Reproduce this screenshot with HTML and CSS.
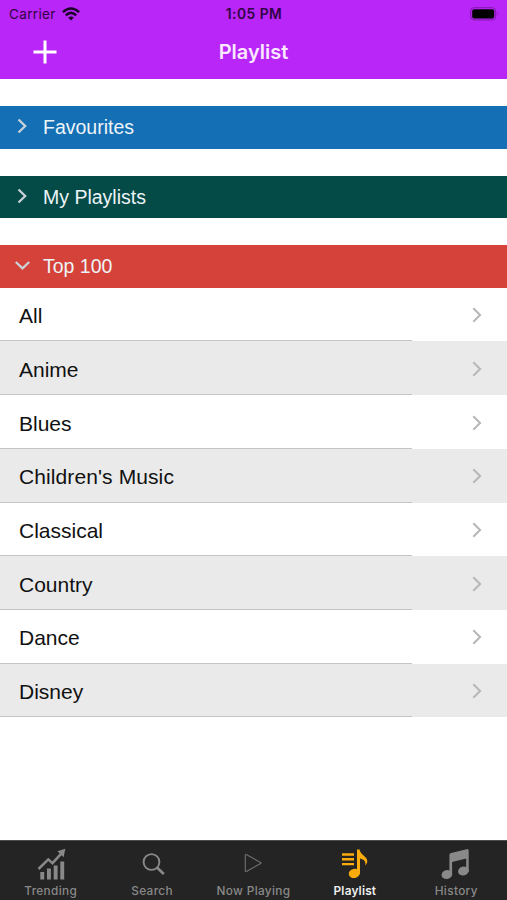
FILE: index.html
```
<!DOCTYPE html>
<html lang="en">
<head>
<meta charset="utf-8">
<title>Playlist</title>
<link rel="stylesheet" href="styles.css">
</head>
<body>
<div class="app">
  <header class="header">
    <div class="status">
      <div class="carrier"><span>Carrier</span>
        <svg width="18" height="14" viewBox="0 0 18 14"><g fill="none" stroke="#1b0428" stroke-width="2.5"><path d="M.9 5.1Q9-2.1 17.1 5.1"/><path d="M3.8 8.3Q9 3.5 14.2 8.3"/></g><path d="M6.1 10.6Q9 8.2 11.9 10.6L9 13.6Z" fill="#1b0428"/></svg>
      </div>
      <div class="time">1:05 PM</div>
      <svg class="battery" width="29" height="14" viewBox="0 0 29 14"><rect x=".7" y=".7" width="25" height="12.2" rx="3.3" fill="none" stroke="#8019aa"/><rect x="2.2" y="2.2" width="22" height="9.2" rx="2" fill="#000"/><path d="M27.2 5Q29 6.8 27.2 8.6Z" fill="#8019aa"/></svg>
    </div>
    <div class="navbar">
      <svg class="plus" width="24" height="24" viewBox="0 0 24 24"><path d="M12 .5v23M.5 12h23" stroke="#fff" stroke-width="3"/></svg>
      <h1 class="title">Playlist</h1>
    </div>
  </header>
  <main class="content">
    <div class="section favourites"><svg width="16" height="16" viewBox="0 0 16 16"><path d="M3.5 1.5l6.7 6.5-6.7 6.5"/></svg><span>Favourites</span></div>
    <div class="section mine"><svg width="16" height="16" viewBox="0 0 16 16"><path d="M3.5 1.5l6.7 6.5-6.7 6.5"/></svg><span>My Playlists</span></div>
    <div class="section top"><svg width="16" height="16" viewBox="0 0 16 16"><path d="M.8 5l6.7 6.4L14.2 5"/></svg><span>Top 100</span></div>
    <ul class="list">
      <li><span>All</span><svg width="10" height="16" viewBox="0 0 10 16"><path d="M1.3 1.2l6.8 6.8-6.8 6.8"/></svg></li>
      <li><span>Anime</span><svg width="10" height="16" viewBox="0 0 10 16"><path d="M1.3 1.2l6.8 6.8-6.8 6.8"/></svg></li>
      <li><span>Blues</span><svg width="10" height="16" viewBox="0 0 10 16"><path d="M1.3 1.2l6.8 6.8-6.8 6.8"/></svg></li>
      <li><span class="wide">Children's Music</span><svg width="10" height="16" viewBox="0 0 10 16"><path d="M1.3 1.2l6.8 6.8-6.8 6.8"/></svg></li>
      <li><span>Classical</span><svg width="10" height="16" viewBox="0 0 10 16"><path d="M1.3 1.2l6.8 6.8-6.8 6.8"/></svg></li>
      <li><span>Country</span><svg width="10" height="16" viewBox="0 0 10 16"><path d="M1.3 1.2l6.8 6.8-6.8 6.8"/></svg></li>
      <li><span>Dance</span><svg width="10" height="16" viewBox="0 0 10 16"><path d="M1.3 1.2l6.8 6.8-6.8 6.8"/></svg></li>
      <li><span>Disney</span><svg width="10" height="16" viewBox="0 0 10 16"><path d="M1.3 1.2l6.8 6.8-6.8 6.8"/></svg></li>
    </ul>
  </main>
  <nav class="tabs">
    <div class="tab">
      <svg width="32" height="34" viewBox="0 0 32 34"><path d="M5.3 25h3.9v7.5H5.3zM12 21.5h3.9v11H12zM18.7 18.5h3.9v14h-3.9zM25.3 14.5h3.9v18h-3.9z" fill="currentColor"/><path d="M3.5 22l9.8-9.6 4.2 3.8 9.2-10" fill="none" stroke="currentColor" stroke-width="2.5"/><path d="M22.4 4.2l7.9-2.4-1.7 8.4z" fill="currentColor"/></svg>
      <span>Trending</span>
    </div>
    <div class="tab">
      <svg width="32" height="34" viewBox="0 0 32 34"><g fill="none" stroke="currentColor"><circle cx="15.5" cy="15" r="7.9" stroke-width="1.9"/><path d="M21 20.6l6.8 6.5" stroke-width="2.7"/></g></svg>
      <span>Search</span>
    </div>
    <div class="tab">
      <svg width="32" height="34" viewBox="0 0 32 34"><path d="M8.3 8q0-1 1-.5l14.3 7.9q1 .6 0 1.2L9.3 24.5q-1 .5-1-.5z" fill="none" stroke="#707070" stroke-width="1.1"/></svg>
      <span>Now Playing</span>
    </div>
    <div class="tab active">
      <svg width="32" height="34" viewBox="0 0 32 34"><path d="M3 7.5h12M3 12.3h12M3 17.1h12" stroke="#fbab0b" stroke-width="2.4"/><ellipse cx="15.3" cy="26.4" rx="5.6" ry="4.6" fill="#fbab0b" transform="rotate(-12 15.3 26.4)"/><path d="M18 27V2.5h2.6c.4 5.3 7.7 6.7 7.7 11.6 0 1.6-.8 3.2-2.1 4.3.9-3.4-.9-6-5.2-6.8V27z" fill="#fbab0b"/></svg>
      <span>Playlist</span>
    </div>
    <div class="tab">
      <svg width="32" height="34" viewBox="0 0 32 34"><ellipse cx="6.9" cy="27.5" rx="5.4" ry="4.4" transform="rotate(-15 6.9 27.5)" fill="currentColor"/><ellipse cx="23.4" cy="24" rx="5.4" ry="4.4" transform="rotate(-15 23.4 24)" fill="currentColor"/><path d="M9.4 28V8q0-1.6 1.6-2L26.7 2.2q2-.5 2 1.4V25h-2.5V11.5l-14.1 3.6V28z" fill="currentColor"/></svg>
      <span>History</span>
    </div>
  </nav>
</div>
</body>
</html>
```
FILE: styles.css
```
* { box-sizing: border-box; }
body { margin: 0; background: #fff; }
svg { display: block; flex: none; }
.app { width: 507px; height: 900px; display: flex; flex-direction: column; font-family: "Liberation Sans", Arial, sans-serif; }
.header { height: 79px; background: #b926f8; flex: none; }
.status { height: 27px; display: grid; grid-template-columns: 1fr auto 1fr; align-items: center; padding: 0 8px 0 9px; font-family: Inter, sans-serif; font-size: 13.5px; color: #300442; }
.carrier { display: flex; align-items: center; gap: 6px; letter-spacing: .35px; }
.time { font-weight: 600; font-size: 13.8px; letter-spacing: .5px; }
.battery { justify-self: end; }
.navbar { height: 52px; display: grid; grid-template-columns: 1fr auto 1fr; align-items: center; padding: 0 0 2px; }
.navbar::after { content: ""; }
.plus { margin: 0 0 0 33px; }
.title { margin: 0; font: 600 20px/24px Inter, sans-serif; color: #f9e8ff; }
.content { flex: 1; padding-top: 27px; }
.section { height: 42.5px; margin-bottom: 27px; display: flex; align-items: center; gap: 12px; padding: 1px 0 0 15px; font-size: 19.5px; color: #edf4f7; }
.section svg { fill: none; stroke: #c9d2d8; stroke-width: 2.3; margin-top: -3px; }
.favourites { background: #146fb5; }
.mine { background: #044a47; }
.top { background: #d54239; margin-bottom: 0; }
.list { list-style: none; margin: 0; padding: .3px 0 0; }
.list li { height: 53.7px; display: flex; align-items: center; justify-content: space-between; padding: 2px 25px 0 19px; font-size: 21px; color: #111; background: linear-gradient(#c4c4c4, #c4c4c4) 0 100% / 412px 1px no-repeat; }
.list li:nth-child(even) { background-color: #eaeaea; }
.list span { padding-top: 1px; }
.list .wide { letter-spacing: .1px; }
.list svg { fill: none; stroke: #b7b7b7; stroke-width: 2; margin-top: -1px; }
.tabs { height: 60px; flex: none; display: grid; grid-template-columns: repeat(5, 1fr); background: #242424; border-top: 1px solid #4b4b4b; }
.tab { display: flex; flex-direction: column; align-items: center; padding-top: 6px; color: #898989; font: 500 11.8px/15px Inter, sans-serif; letter-spacing: .35px; }
.tab svg { margin-bottom: 3px; }
.active { color: #efefef; font-weight: 600; letter-spacing: .2px; }
```
